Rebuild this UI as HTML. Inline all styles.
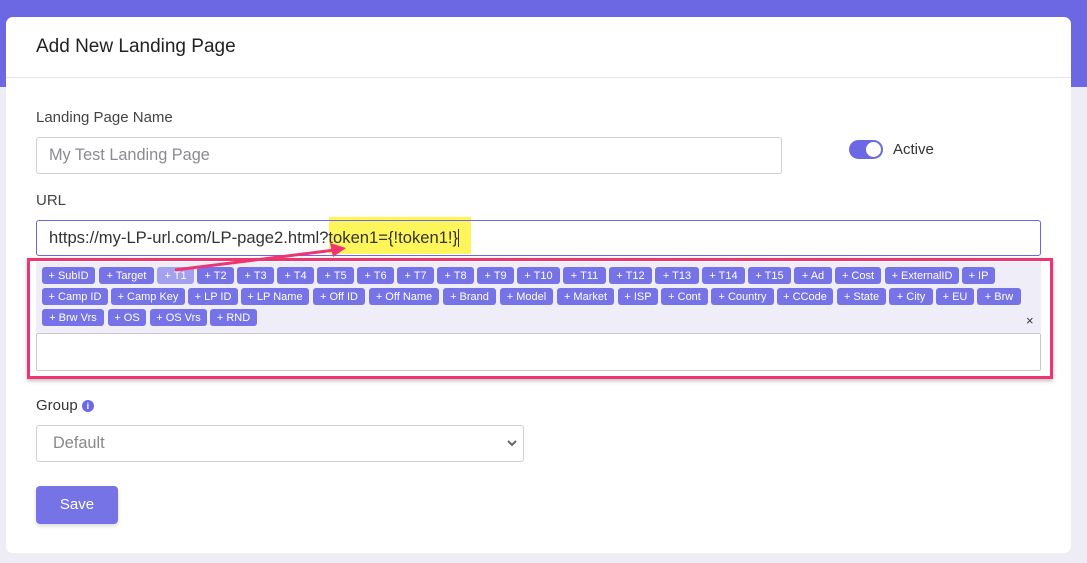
<!DOCTYPE html>
<html><head><meta charset="utf-8"><style>
*{box-sizing:border-box;margin:0;padding:0}
body{width:1087px;height:563px;background:#eeedf6;font-family:"Liberation Sans",sans-serif;position:relative;overflow:hidden}
.band{position:absolute;left:0;top:0;width:1087px;height:87px;background:#6c68e4}
.card{position:absolute;left:6px;top:17px;width:1065px;height:536px;background:#fff;border-radius:7px}
.hdr{position:absolute;left:0;top:60px;width:100%;height:1px;background:#e6e6ea}
.abs{position:absolute}
.lbl{font-size:15px;color:#444}
.inp{position:absolute;border:1px solid #cfcfd6;border-radius:3px;background:#fff;font-size:16.3px;padding-left:12px;display:flex;align-items:center}
.tag{position:absolute;height:17px;background:#7673e6;color:#fff;font-size:11px;border-radius:3px;text-align:center;line-height:18px;white-space:nowrap}
</style></head><body>
<div class="band"></div>
<div class="card"><div class="hdr"></div></div>
<div class="abs" style="left:36px;top:36px;font-size:19px;color:#222">Add New Landing Page</div>
<div class="abs lbl" style="left:36px;top:109px">Landing Page Name</div>
<div class="inp" style="left:36px;top:137px;width:746px;height:37px;color:#8a8a92">My Test Landing Page</div>
<div class="abs" style="left:849px;top:140px;width:34px;height:19px;border-radius:10px;background:#6c68e4"></div>
<div class="abs" style="left:866px;top:142px;width:15px;height:15px;border-radius:50%;background:#fff"></div>
<div class="abs" style="left:893px;top:141px;font-size:15px;color:#333">Active</div>
<div class="abs lbl" style="left:36px;top:192px">URL</div>
<div class="abs" style="left:329px;top:217px;width:142px;height:37px;background:#fef55a"></div>
<div class="inp" style="left:36px;top:220px;width:1005px;height:36px;border-color:#6c68e4;background:transparent;color:#333;font-size:16.6px">https://my-LP-url.com/LP-page2.html?token1={!token1!}<span style="display:inline-block;width:1px;height:18px;background:#333"></span></div>
<div class="abs" style="left:27px;top:258px;width:1026px;height:121px;border:3px solid #ee3572;box-shadow:0 2px 4px rgba(0,0,0,.25)"></div>
<div class="abs" style="left:36px;top:262px;width:1005px;height:71px;background:#efeef8"></div>
<div class="abs" style="left:36px;top:333px;width:1005px;height:38px;border:1px solid #c8c8cc;background:#fff;border-radius:2px"></div>
<div class="abs" style="left:1026px;top:313px;font-size:13px;color:#333">×</div>
<div class="tag" style="left:42px;top:267px;width:53px">+ SubID</div>
<div class="tag" style="left:99px;top:267px;width:55px">+ Target</div>
<div class="tag" style="left:157px;top:267px;width:37px;background:#a3a0ee">+ T1</div>
<div class="tag" style="left:197px;top:267px;width:37px">+ T2</div>
<div class="tag" style="left:237px;top:267px;width:37px">+ T3</div>
<div class="tag" style="left:277px;top:267px;width:37px">+ T4</div>
<div class="tag" style="left:317px;top:267px;width:37px">+ T5</div>
<div class="tag" style="left:357px;top:267px;width:37px">+ T6</div>
<div class="tag" style="left:397px;top:267px;width:37px">+ T7</div>
<div class="tag" style="left:437px;top:267px;width:37px">+ T8</div>
<div class="tag" style="left:477px;top:267px;width:37px">+ T9</div>
<div class="tag" style="left:517px;top:267px;width:43px">+ T10</div>
<div class="tag" style="left:563px;top:267px;width:43px">+ T11</div>
<div class="tag" style="left:609px;top:267px;width:43px">+ T12</div>
<div class="tag" style="left:655px;top:267px;width:44px">+ T13</div>
<div class="tag" style="left:702px;top:267px;width:43px">+ T14</div>
<div class="tag" style="left:748px;top:267px;width:43px">+ T15</div>
<div class="tag" style="left:794px;top:267px;width:38px">+ Ad</div>
<div class="tag" style="left:835px;top:267px;width:46px">+ Cost</div>
<div class="tag" style="left:885px;top:267px;width:74px">+ ExternalID</div>
<div class="tag" style="left:962px;top:267px;width:33px">+ IP</div>
<div class="tag" style="left:42px;top:288px;width:66px">+ Camp ID</div>
<div class="tag" style="left:111px;top:288px;width:74px">+ Camp Key</div>
<div class="tag" style="left:188px;top:288px;width:50px">+ LP ID</div>
<div class="tag" style="left:241px;top:288px;width:68px">+ LP Name</div>
<div class="tag" style="left:313px;top:288px;width:52px">+ Off ID</div>
<div class="tag" style="left:369px;top:288px;width:70px">+ Off Name</div>
<div class="tag" style="left:443px;top:288px;width:53px">+ Brand</div>
<div class="tag" style="left:500px;top:288px;width:53px">+ Model</div>
<div class="tag" style="left:557px;top:288px;width:57px">+ Market</div>
<div class="tag" style="left:618px;top:288px;width:40px">+ ISP</div>
<div class="tag" style="left:661px;top:288px;width:47px">+ Cont</div>
<div class="tag" style="left:711px;top:288px;width:63px">+ Country</div>
<div class="tag" style="left:777px;top:288px;width:56px">+ CCode</div>
<div class="tag" style="left:837px;top:288px;width:49px">+ State</div>
<div class="tag" style="left:889px;top:288px;width:44px">+ City</div>
<div class="tag" style="left:936px;top:288px;width:38px">+ EU</div>
<div class="tag" style="left:977px;top:288px;width:44px">+ Brw</div>
<div class="tag" style="left:42px;top:309px;width:62px">+ Brw Vrs</div>
<div class="tag" style="left:108px;top:309px;width:38px">+ OS</div>
<div class="tag" style="left:150px;top:309px;width:57px">+ OS Vrs</div>
<div class="tag" style="left:210px;top:309px;width:47px">+ RND</div>
<svg class="abs" style="left:0;top:0" width="1087" height="563"><line x1="175" y1="270" x2="335" y2="250" stroke="#ee3572" stroke-width="3"/><polygon points="346,248 330,243 333,257" fill="#ee3572"/></svg>
<div class="abs" style="left:36px;top:397px;font-size:15px;color:#333">Group <span style="display:inline-block;width:12px;height:12px;border-radius:50%;background:#6c68e4;color:#fff;font-size:9px;text-align:center;line-height:12px;font-weight:bold;vertical-align:1px">i</span></div>
<div class="inp" style="left:36px;top:425px;width:488px;height:37px;color:#888;padding-left:16px">Default</div>
<svg class="abs" style="left:507px;top:438px" width="10" height="10"><path d="M1 3 L5 7 L9 3" stroke="#666" stroke-width="2" fill="none"/></svg>
<div class="abs" style="left:36px;top:486px;width:82px;height:38px;background:#7673e6;border-radius:4px;color:#fff;font-size:15px;text-align:center;line-height:38px;box-shadow:0 2px 4px rgba(0,0,0,.15)">Save</div>
</body></html>
